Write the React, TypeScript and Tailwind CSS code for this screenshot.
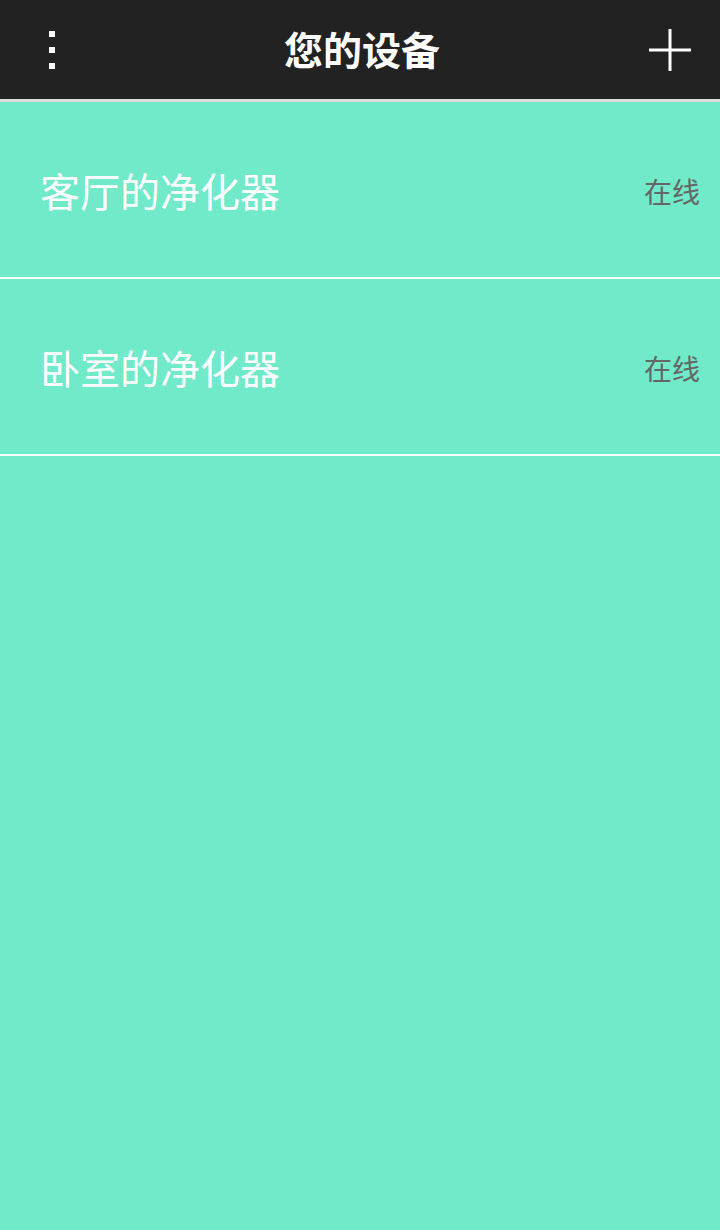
const devices = [
  { name: "客厅的净化器", status: "在线" },
  { name: "卧室的净化器", status: "在线" },
];

export default function App() {
  return (
    <div
      className="w-[720px] h-[1230px] bg-[#70eac8] flex flex-col"
      style={{ fontFamily: '"Noto Sans CJK SC", "Noto Sans", sans-serif' }}
    >
      <header className="h-[102px] bg-[#222222] border-b-[3px] border-[#dddddd] flex items-center justify-between">
        <button className="w-[104px] h-full flex flex-col items-center justify-center gap-[10px]">
          <span className="w-[6px] h-[6px] bg-white" />
          <span className="w-[6px] h-[6px] bg-white" />
          <span className="w-[6px] h-[6px] bg-white" />
        </button>
        <h1 className="text-[39px] font-bold text-white leading-none -mt-[2px]">您的设备</h1>
        <button className="w-[100px] h-full flex items-center justify-center">
          <svg width="46" height="46" viewBox="0 0 46 46">
            <path d="M23 2v42M2 23h42" stroke="#ffffff" strokeWidth="3" />
          </svg>
        </button>
      </header>
      {devices.map((d) => (
        <div
          key={d.name}
          className="h-[177px] border-b-2 border-white flex items-center justify-between pl-[40px] pr-[20px]"
        >
          <span className="text-[40px] text-white leading-none">{d.name}</span>
          <span className="text-[28px] text-[#666666] leading-none mt-[2px]">{d.status}</span>
        </div>
      ))}
    </div>
  );
}
